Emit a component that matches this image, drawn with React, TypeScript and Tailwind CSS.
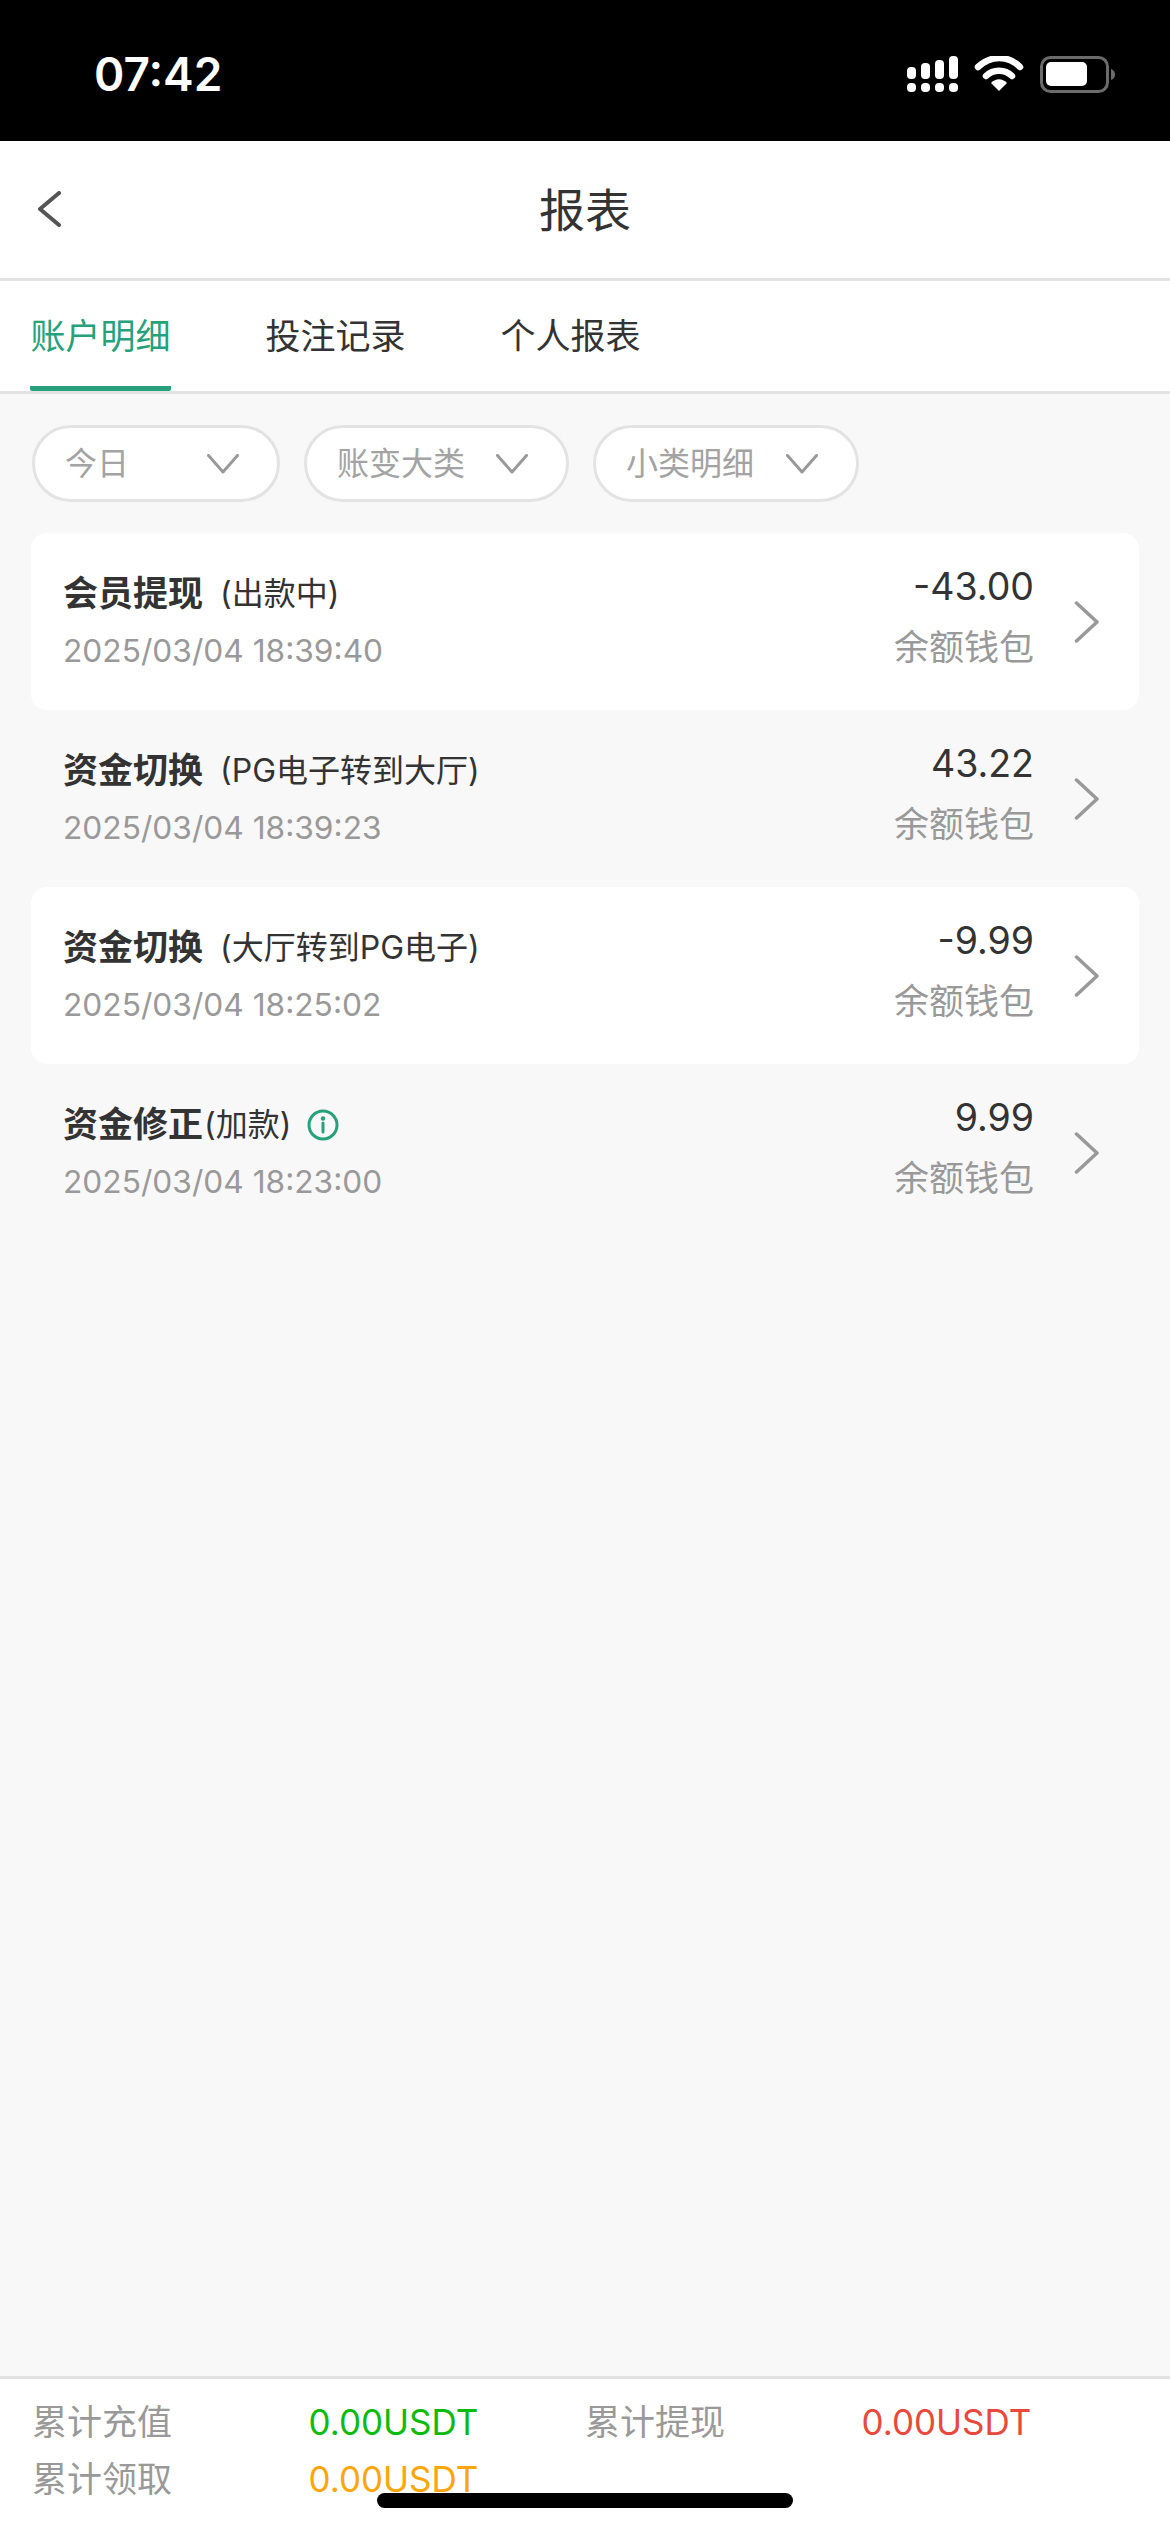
const FONT = "font-['Inter','Noto_Sans_CJK_SC',sans-serif]"

const TABS = ['账户明细', '投注记录', '个人报表']

const FILTERS = [
  { label: '今日', width: 'w-[248px]' },
  { label: '账变大类', width: 'w-[265px]' },
  { label: '小类明细', width: 'w-[266px]' },
]

const RECORDS = [
  { title: '会员提现', note: '(出款中)', noteGap: 'ml-[17px]', time: '2025/03/04 18:39:40', amount: '-43.00', card: true },
  { title: '资金切换', note: '(PG电子转到大厅)', noteGap: 'ml-[17px]', time: '2025/03/04 18:39:23', amount: '43.22', card: false },
  { title: '资金切换', note: '(大厅转到PG电子)', noteGap: 'ml-[17px]', time: '2025/03/04 18:25:02', amount: '-9.99', card: true },
  { title: '资金修正', note: '(加款)', noteGap: 'ml-[1px]', time: '2025/03/04 18:23:00', amount: '9.99', card: false, info: true },
]

const SUMMARY = [
  { label: '累计充值', value: '0.00USDT', color: 'text-[#0dbb0d]' },
  { label: '累计提现', value: '0.00USDT', color: 'text-[#e8493c]' },
  { label: '累计领取', value: '0.00USDT', color: 'text-[#fca60b]' },
]

function StatusIcons() {
  return (
    <svg width="208" height="38" viewBox="0 0 208 38" className="block">
      {/* signal */}
      <rect x="0" y="11" width="9" height="12" rx="4" fill="#fff" />
      <rect x="14" y="7" width="9" height="16" rx="4" fill="#fff" />
      <rect x="28" y="4" width="9" height="19" rx="4" fill="#fff" />
      <rect x="42" y="0" width="9" height="23" rx="4" fill="#fff" />
      <rect x="0" y="27" width="9" height="9" rx="4" fill="#fff" />
      <rect x="14" y="27" width="9" height="9" rx="4" fill="#fff" />
      <rect x="28" y="27" width="9" height="9" rx="4" fill="#fff" />
      <rect x="42" y="27" width="9" height="9" rx="4" fill="#fff" />
      {/* wifi */}
      <path d="M71 11C84 -1 101 -1 113 11" fill="none" stroke="#fff" strokeWidth="6.5" strokeLinecap="round" />
      <path d="M79 20C86 13 98 13 105 20" fill="none" stroke="#fff" strokeWidth="6.5" strokeLinecap="round" />
      <path d="M84 27C89 22 95 22 100 27L92 35Z" fill="#fff" />
      {/* battery */}
      <rect x="134.5" y="1.5" width="66" height="34" rx="9" fill="none" stroke="#6b6b6b" strokeWidth="3" />
      <rect x="139" y="6" width="41" height="24" rx="5" fill="#fff" />
      <path d="M204 13C207 14 208 16 208 18.500C208 21 207 23 204 24Z" fill="#6b6b6b" />
    </svg>
  )
}

function Chevron({ className }: { className: string }) {
  return (
    <svg width="26" height="42" viewBox="0 0 26 42" fill="none" className={className}>
      <path d="M2.500 2L23 21L2.500 40" stroke="#999" strokeWidth="3.500" strokeLinecap="round" strokeLinejoin="round" />
    </svg>
  )
}

function FilterCaret() {
  return (
    <svg width="32" height="20" viewBox="0 0 32 20" fill="none" className="shrink-0">
      <path d="M1.500 1.500L16 18L30.500 1.500" stroke="#999" strokeWidth="3" strokeLinecap="round" strokeLinejoin="round" />
    </svg>
  )
}

function InfoIcon() {
  return (
    <svg width="32" height="32" viewBox="0 0 32 32" fill="none" className="ml-[16px] shrink-0">
      <circle cx="16" cy="16" r="14" stroke="#26a17b" strokeWidth="3" />
      <circle cx="16" cy="9.500" r="2.200" fill="#26a17b" />
      <path d="M16 14V23" stroke="#26a17b" strokeWidth="3" strokeLinecap="round" />
    </svg>
  )
}

export default function App() {
  return (
    <div className={`flex h-[2532px] w-[1170px] flex-col overflow-hidden bg-[#f8f8f8] ${FONT}`}>
      {/* Status bar */}
      <div className="flex h-[141px] shrink-0 items-start justify-between bg-black pl-[94px] pr-[55px]">
        <span className="mt-[46px] text-[46px] leading-[56px] font-semibold text-white">07:42</span>
        <div className="mt-[56px]">
          <StatusIcons />
        </div>
      </div>

      {/* Header */}
      <div className="relative flex h-[137px] shrink-0 items-center justify-center bg-white">
        <svg width="24" height="36" viewBox="0 0 24 36" fill="none" className="absolute left-[37px] top-[50px]">
          <path d="M22 2L3 18L22 34" stroke="#555" strokeWidth="4" strokeLinecap="round" strokeLinejoin="round" />
        </svg>
        <h1 className="text-[46px] leading-[60px] text-[#333]">报表</h1>
      </div>

      {/* Tabs */}
      <div className="flex h-[116px] shrink-0 gap-[94px] border-y-[3px] border-[#e3e3e3] bg-white pl-[30px]">
        {TABS.map((tab, i) => (
          <div
            key={tab}
            className={`flex h-full w-[141px] items-center justify-center border-b-[5px] pt-[6px] text-[35px] ${
              i === 0 ? 'rounded-b-[2px] border-[#26a17b] text-[#26a17b]' : 'border-transparent text-[#333]'
            }`}
          >
            {tab}
          </div>
        ))}
      </div>

      {/* Filters */}
      <div className="flex shrink-0 gap-[24px] pl-[32px] pt-[31px]">
        {FILTERS.map(({ label, width }) => (
          <div
            key={label}
            className={`flex h-[77px] items-center justify-between rounded-full border-[3px] border-[#e3e3e3] bg-white pl-[30px] pr-[38px] text-[32px] text-[#a3a3a3] ${width}`}
          >
            <span>{label}</span>
            <FilterCaret />
          </div>
        ))}
      </div>

      {/* Records */}
      <div className="flex-1 px-[31px] pt-[31px]">
        {RECORDS.map((r) => (
          <div
            key={r.time}
            className={`flex h-[177px] items-start rounded-[16px] pl-[32px] pr-[39px] ${r.card ? 'bg-white' : ''}`}
          >
            <div className="flex-1 pt-[32px]">
              <div className="flex h-[57px] items-center text-[#333]">
                <span className="text-[35px] font-bold">{r.title}</span>
                <span className={`text-[32px] ${r.noteGap}`}>{r.note}</span>
                {r.info && <InfoIcon />}
              </div>
              <div className="text-[31.7px] leading-[57px] text-[#999]">{r.time}</div>
            </div>
            <div className="flex flex-col items-end pt-[24px]">
              <span className="text-[37.5px] leading-[60px] text-[#333]">{r.amount}</span>
              <span className="text-[35px] leading-[60px] text-[#999]">余额钱包</span>
            </div>
            <Chevron className="ml-[40px] mt-[68px] shrink-0" />
          </div>
        ))}
      </div>

      {/* Totals */}
      <div className="relative h-[156px] shrink-0 border-t-[3px] border-[#e3e3e3] bg-white px-[32px] pt-[15px]">
        <div className="grid grid-cols-4 text-[35px] leading-[57px]">
          {SUMMARY.map((s) => (
            <div key={s.label} className="contents">
              <span className="text-[#999]">{s.label}</span>
              <span className={s.color}>{s.value}</span>
            </div>
          ))}
        </div>
        <div className="absolute bottom-[24px] left-[377px] h-[15px] w-[416px] rounded-full bg-black" />
      </div>
    </div>
  )
}
